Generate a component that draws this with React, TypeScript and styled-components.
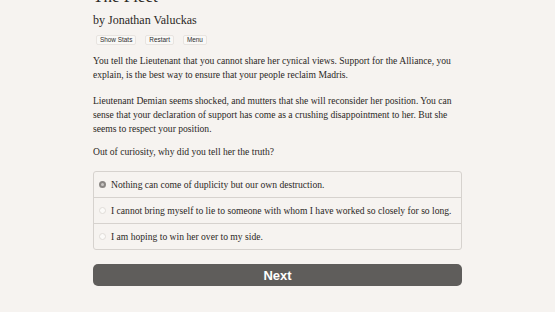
import React from "react";
import styled, { createGlobalStyle } from "styled-components";

const Global = createGlobalStyle`
  html, body { margin: 0; padding: 0; background: #f6f3f0; }
  body { overflow: hidden; }
`;

const Page = styled.div`
  width: 555px;
  height: 312px;
  background: #f6f3f0;
  display: flex;
  justify-content: center;
  overflow: hidden;
`;

const Column = styled.div`
  width: 369px;
  margin-top: -13px;
  display: flex;
  flex-direction: column;
  font-family: "Liberation Serif", "Times New Roman", serif;
  color: #2b2825;
`;

const Title = styled.h1`
  margin: 0;
  font-size: 17px;
  font-weight: normal;
  line-height: 20px;
`;

const Byline = styled.h2`
  margin: 6px 0 0 0;
  font-size: 12px;
  font-weight: normal;
  line-height: 14px;
`;

const Toolbar = styled.div`
  display: flex;
  gap: 9px;
  margin-top: 8px;
  padding-left: 3px;
`;

const SmallButton = styled.button`
  font-family: "Liberation Sans", Arial, sans-serif;
  font-size: 6.4px;
  color: #2e2e2e;
  background: #f9f8f6;
  border: 1px solid #e8e4e0;
  border-radius: 2px;
  padding: 0 3px;
  height: 10px;
  line-height: 8px;
`;

const Para = styled.p<{ $gap?: number }>`
  margin: ${(p) => p.$gap ?? 9}px 0 0 0;
  font-size: 9.6px;
  line-height: 14px;
`;

const Options = styled.div`
  margin-top: 12px;
  border: 1px solid #d6d2ce;
  border-radius: 3px;
  display: flex;
  flex-direction: column;
`;

const Option = styled.label<{ $first?: boolean }>`
  display: flex;
  align-items: center;
  gap: 5px;
  height: 25px;
  padding-left: 5px;
  font-size: 9.6px;
  border-top: ${(p) => (p.$first ? "none" : "1px solid #d6d2ce")};
`;

const Radio = styled.span<{ $checked?: boolean }>`
  width: 7px;
  height: 7px;
  border-radius: 50%;
  box-sizing: border-box;
  border: ${(p) => (p.$checked ? "2px solid #8a8784" : "1px solid #e0dcd8")};
  background: ${(p) => (p.$checked ? "#c9c6c3" : "#fbfaf8")};
  flex: none;
`;

const NextButton = styled.button`
  margin-top: 14px;
  height: 22px;
  border: none;
  border-radius: 5px;
  background: #5f5d5b;
  color: #ffffff;
  font-family: "Liberation Sans", Arial, sans-serif;
  font-weight: bold;
  font-size: 13px;
`;

export default function App() {
  return (
    <Page>
      <Global />
      <Column>
        <Title>The Fleet</Title>
        <Byline>by Jonathan Valuckas</Byline>
        <Toolbar>
          <SmallButton>Show Stats</SmallButton>
          <SmallButton>Restart</SmallButton>
          <SmallButton>Menu</SmallButton>
        </Toolbar>
        <Para>
          You tell the Lieutenant that you cannot share her cynical views. Support for the Alliance, you
          explain, is the best way to ensure that your people reclaim Madris.
        </Para>
        <Para $gap={12}>
          Lieutenant Demian seems shocked, and mutters that she will reconsider her position. You can
          sense that your declaration of support has come as a crushing disappointment to her. But she
          seems to respect your position.
        </Para>
        <Para $gap={9}>Out of curiosity, why did you tell her the truth?</Para>
        <Options>
          <Option $first>
            <Radio $checked />
            Nothing can come of duplicity but our own destruction.
          </Option>
          <Option>
            <Radio />
            I cannot bring myself to lie to someone with whom I have worked so closely for so long.
          </Option>
          <Option>
            <Radio />
            I am hoping to win her over to my side.
          </Option>
        </Options>
        <NextButton>Next</NextButton>
      </Column>
    </Page>
  );
}
